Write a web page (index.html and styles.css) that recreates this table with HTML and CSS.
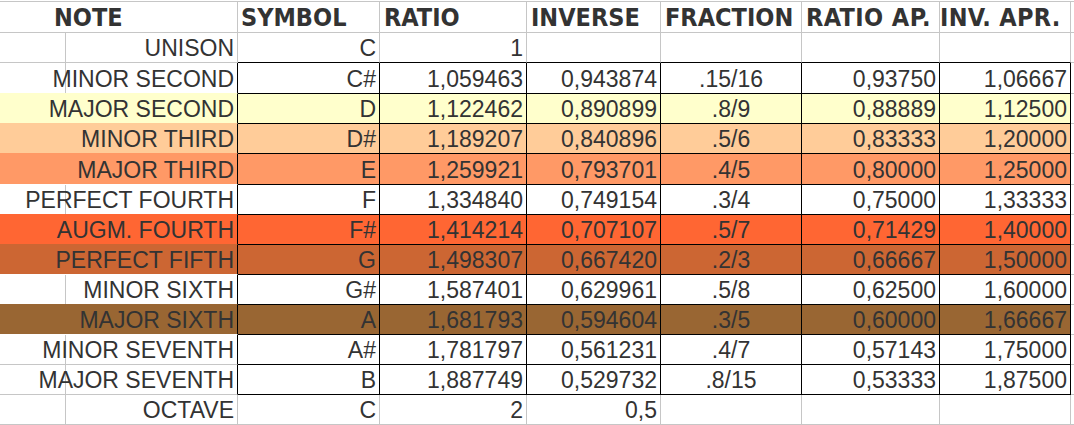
FILE: index.html
```html
<!DOCTYPE html>
<html>
<head>
<meta charset="utf-8">
<title>Intervals</title>
<link rel="stylesheet" href="styles.css">
</head>
<body>
<div class="sheet">
  <div class="row head">
    <div class="note">NOTE</div><div>SYMBOL</div><div>RATIO</div><div>INVERSE</div><div>FRACTION</div><div>RATIO AP.</div><div>INV. APR.</div><div class="x"></div>
  </div>
  <div class="row top">
    <div class="note">UNISON</div><div>C</div><div>1</div><div></div><div></div><div></div><div></div><div class="x"></div>
  </div>
  <div class="row in pre-yellow">
    <div class="note">MINOR SECOND</div><div>C#</div><div>1,059463</div><div>0,943874</div><div class="fr">.15/16</div><div>0,93750</div><div>1,06667</div><div class="x"></div>
  </div>
  <div class="row in yellow">
    <div class="note">MAJOR SECOND</div><div>D</div><div>1,122462</div><div>0,890899</div><div class="fr">.8/9</div><div>0,88889</div><div>1,12500</div><div class="x"></div>
  </div>
  <div class="row in peach">
    <div class="note">MINOR THIRD</div><div>D#</div><div>1,189207</div><div>0,840896</div><div class="fr">.5/6</div><div>0,83333</div><div>1,20000</div><div class="x"></div>
  </div>
  <div class="row in salmon">
    <div class="note">MAJOR THIRD</div><div>E</div><div>1,259921</div><div>0,793701</div><div class="fr">.4/5</div><div>0,80000</div><div>1,25000</div><div class="x"></div>
  </div>
  <div class="row in pre-orange">
    <div class="note">PERFECT FOURTH</div><div>F</div><div>1,334840</div><div>0,749154</div><div class="fr">.3/4</div><div>0,75000</div><div>1,33333</div><div class="x"></div>
  </div>
  <div class="row in orange">
    <div class="note">AUGM. FOURTH</div><div>F#</div><div>1,414214</div><div>0,707107</div><div class="fr">.5/7</div><div>0,71429</div><div>1,40000</div><div class="x"></div>
  </div>
  <div class="row in rust">
    <div class="note">PERFECT FIFTH</div><div>G</div><div>1,498307</div><div>0,667420</div><div class="fr">.2/3</div><div>0,66667</div><div>1,50000</div><div class="x"></div>
  </div>
  <div class="row in pre-brown">
    <div class="note">MINOR SIXTH</div><div>G#</div><div>1,587401</div><div>0,629961</div><div class="fr">.5/8</div><div>0,62500</div><div>1,60000</div><div class="x"></div>
  </div>
  <div class="row in brown">
    <div class="note">MAJOR SIXTH</div><div>A</div><div>1,681793</div><div>0,594604</div><div class="fr">.3/5</div><div>0,60000</div><div>1,66667</div><div class="x"></div>
  </div>
  <div class="row in">
    <div class="note">MINOR SEVENTH</div><div>A#</div><div>1,781797</div><div>0,561231</div><div class="fr">.4/7</div><div>0,57143</div><div>1,75000</div><div class="x"></div>
  </div>
  <div class="row in">
    <div class="note">MAJOR SEVENTH</div><div>B</div><div>1,887749</div><div>0,529732</div><div class="fr">.8/15</div><div>0,53333</div><div>1,87500</div><div class="x"></div>
  </div>
  <div class="row">
    <div class="note">OCTAVE</div><div>C</div><div>2</div><div>0,5</div><div></div><div></div><div></div><div class="x"></div>
  </div>
</div>
</body>
</html>
```

FILE: styles.css
```css
html, body {
  margin: 0;
  padding: 0;
  background: #ffffff;
}

.sheet {
  margin-top: 1px;
  display: grid;
  grid-template-columns: 238px 142px 147px 134px 141px 138px 131px 1fr;
  grid-template-rows: 32px 30px 31px 30px 30px 31px repeat(8, 30px);
  font-family: "Liberation Sans", Arial, sans-serif;
  font-size: 23px;
  color: #333333;
}

.row {
  display: contents;
}

.row > div {
  box-sizing: border-box;
  border-right: 1px solid #c6c6c6;
  border-bottom: 1px solid #c6c6c6;
  display: flex;
  align-items: flex-end;
  justify-content: flex-end;
  line-height: 24px;
  padding: 0 3px 2px 0;
  white-space: nowrap;
  overflow: visible;
}

.row > .note {
  padding-right: 3px;
  background-image: linear-gradient(to right, transparent 65px, #c6c6c6 65px, #c6c6c6 66px, transparent 66px);
}

.row > .fr {
  justify-content: center;
  padding-right: 0;
}

.row > .x {
  border-right: none;
}

/* header */
.head > div {
  border-top: 1px solid #c6c6c6;
  justify-content: flex-start;
  padding: 0 0 0 4px;
  font-family: "DejaVu Sans Condensed", "DejaVu Sans", sans-serif;
  font-stretch: condensed;
  font-weight: bold;
  font-size: 25px;
  line-height: 28px;
  letter-spacing: 0;
}

.head > .note {
  padding-left: 54px;
  background-image: none;
}

.head > div:nth-child(2) {
  padding-left: 3px;
}

.head > div:nth-child(6) {
  letter-spacing: 0.4px;
}

.head > div:nth-child(7) {
  padding-left: 0;
  letter-spacing: 0.3px;
}

/* black bordered block */
.top > div:not(.note):not(.x) {
  border-bottom-color: #000000;
}

.in > div:not(.x) {
  border-right-color: #000000;
}

.in > div:not(.note):not(.x) {
  border-bottom-color: #000000;
}

/* fills */
.yellow > div:not(.x) { background-color: #ffffcc; }
.peach > div:not(.x) { background-color: #ffcc99; }
.salmon > div:not(.x) { background-color: #ff9966; }
.orange > div:not(.x) { background-color: #ff6633; }
.rust > div:not(.x) { background-color: #cc6633; }
.brown > div:not(.x) { background-color: #996633; }

.yellow > .note,
.peach > .note,
.salmon > .note,
.orange > .note,
.rust > .note,
.brown > .note {
  background-image: none;
}

.yellow > .note { border-bottom-color: #ffcc99; }
.peach > .note { border-bottom-color: #ff9966; }
.salmon > .note { border-bottom-color: #ffffff; }
.orange > .note { border-bottom-color: #cc6633; }
.rust > .note { border-bottom-color: #ffffff; }
.brown > .note { border-bottom-color: #ffffff; }

.pre-yellow > .note { border-bottom-color: #ffffcc; }
.pre-orange > .note { border-bottom-color: #ff6633; }
.pre-brown > .note { border-bottom-color: #996633; }
```
